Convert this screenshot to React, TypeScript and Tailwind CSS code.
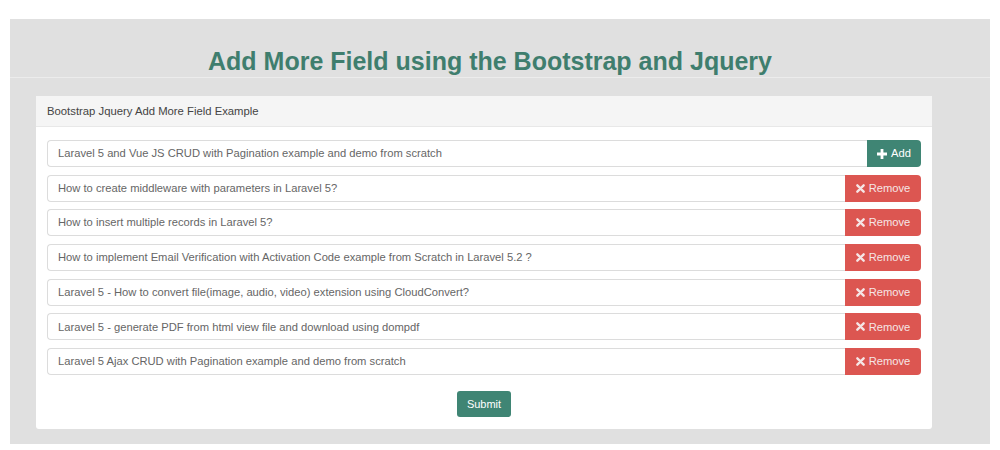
const rows = [
  "How to create middleware with parameters in Laravel 5?",
  "How to insert multiple records in Laravel 5?",
  "How to implement Email Verification with Activation Code example from Scratch in Laravel 5.2 ?",
  "Laravel 5 - How to convert file(image, audio, video) extension using CloudConvert?",
  "Laravel 5 - generate PDF from html view file and download using dompdf",
  "Laravel 5 Ajax CRUD with Pagination example and demo from scratch",
];

const PlusIcon = () => (
  <svg width="10" height="10" viewBox="0 0 10 10" className="mr-1">
    <path d="M3.6 0h2.8v3.6H10v2.8H6.4V10H3.6V6.4H0V3.6h3.6z" fill="currentColor" />
  </svg>
);

const XIcon = () => (
  <svg width="9" height="9" viewBox="0 0 10 10" className="mr-1">
    <path d="M1.5 1.5l7 7M8.5 1.5l-7 7" stroke="currentColor" strokeWidth="2.6" strokeLinecap="round" />
  </svg>
);

const FieldRow = ({ value = "", isFirst = false }) => (
  <div className="flex h-[27px]">
    <div className="flex-1 flex items-center border border-[#dcdcdc] rounded-l-[4px] border-r-0 bg-white px-[10px] text-[11.2px] text-[#666]">
      {value}
    </div>
    {isFirst ? (
      <button className="w-[54px] flex items-center justify-center bg-[#3f8574] text-white text-[11.2px] rounded-r-[4px]">
        <PlusIcon />
        Add
      </button>
    ) : (
      <button className="w-[76px] flex items-center justify-center bg-[#dc5651] text-[#f5e6e6] text-[11.2px] rounded-r-[4px]">
        <XIcon />
        Remove
      </button>
    )}
  </div>
);

const App = () => {
  return (
    <div className="w-[1000px] h-[450px] bg-white pt-[19px] px-[10px] font-['Liberation_Sans',Arial,sans-serif]">
      <div className="bg-[#e0e0e0] h-[425px]">
        <div className="h-[59px] border-b border-[#ececec] flex items-end justify-center pb-[3px] pr-[20px]">
          <h1 className="text-[25px] font-bold text-[#3f7e6e] leading-none">
            Add More Field using the Bootstrap and Jquery
          </h1>
        </div>
        <div className="ml-[26px] mr-[58px] mt-[18px] bg-white rounded-[3px] h-[333px] flex flex-col">
          <div className="h-[31px] bg-[#f5f5f5] border-b border-[#e8e8e8] flex items-center px-[11px] text-[11.3px] text-[#444]">
            Bootstrap Jquery Add More Field Example
          </div>
          <div className="px-[11px] pt-[13px] flex flex-col gap-[7.7px]">
            <FieldRow value="Laravel 5 and Vue JS CRUD with Pagination example and demo from scratch" isFirst />
            {rows.map((r, i) => (
              <FieldRow key={i} value={r} />
            ))}
          </div>
          <div className="flex justify-center mt-[16px]">
            <button className="w-[54px] h-[26px] bg-[#3f8574] text-white text-[11px] rounded-[3px]">
              Submit
            </button>
          </div>
        </div>
      </div>
    </div>
  );
};

export default App;
